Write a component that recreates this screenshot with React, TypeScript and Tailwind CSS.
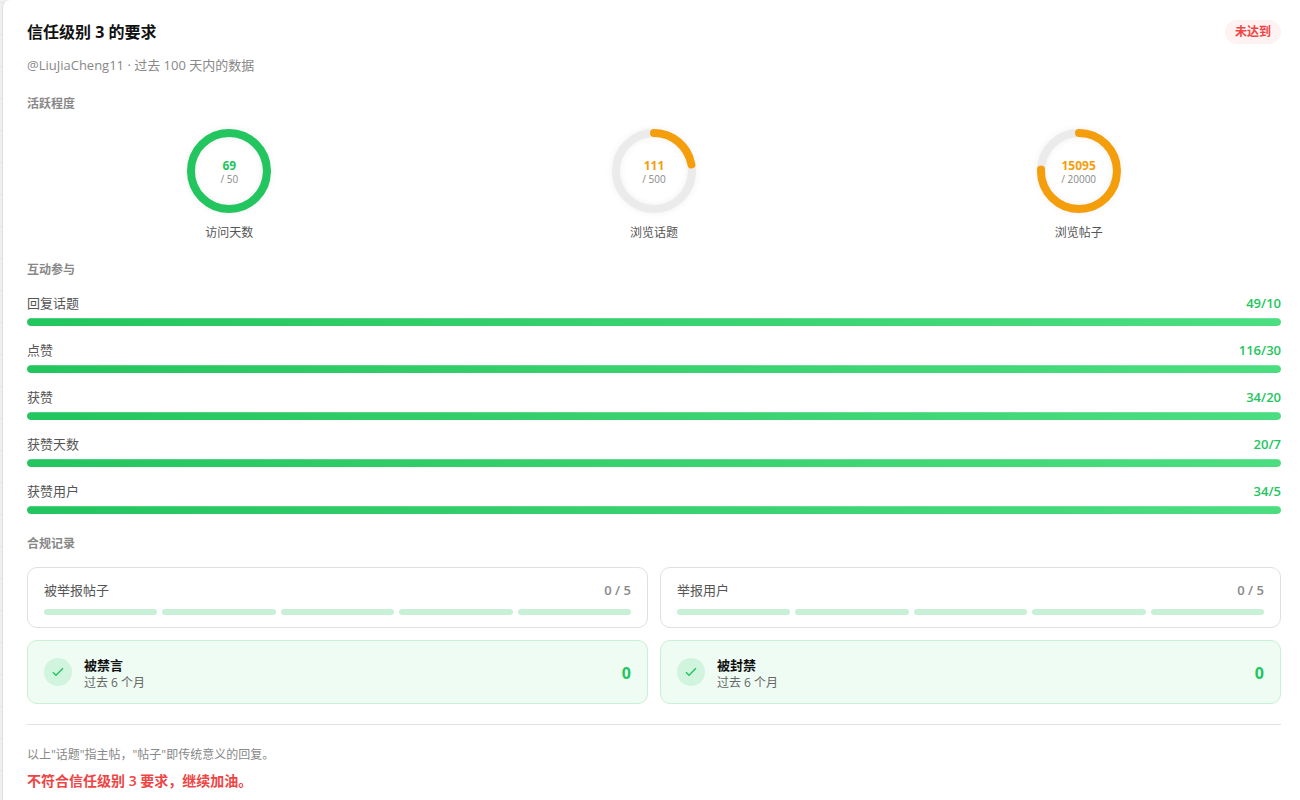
import React from 'react';

interface RingStat {
  label: string;
  value: number;
  target: number;
}

interface BarStat {
  label: string;
  value: number;
  target: number;
}

const rings: RingStat[] = [
  { label: '访问天数', value: 69, target: 50 },
  { label: '浏览话题', value: 111, target: 500 },
  { label: '浏览帖子', value: 15095, target: 20000 },
];

const bars: BarStat[] = [
  { label: '回复话题', value: 49, target: 10 },
  { label: '点赞', value: 116, target: 30 },
  { label: '获赞', value: 34, target: 20 },
  { label: '获赞天数', value: 20, target: 7 },
  { label: '获赞用户', value: 34, target: 5 },
];

const quotas = [
  { label: '被举报帖子', used: 0, max: 5 },
  { label: '举报用户', used: 0, max: 5 },
];

const vetoes = [
  { label: '被禁言', period: '过去 6 个月', count: 0 },
  { label: '被封禁', period: '过去 6 个月', count: 0 },
];

const RADIUS = 38;
const LENGTH = 2 * Math.PI * RADIUS;

const SectionTitle: React.FC<{ children: React.ReactNode }> = ({ children }) => (
  <h2 className="text-[12px] leading-[20px] font-semibold text-[#888888]">{children}</h2>
);

const Ring: React.FC<RingStat> = ({ label, value, target }) => {
  const ratio = Math.min(value / target, 1);
  const met = value >= target;

  return (
    <div className="flex flex-col items-center">
      <div className="grid place-items-center">
        <svg
          viewBox="0 0 84 84"
          className="col-start-1 row-start-1 size-[84px] -rotate-90 overflow-visible drop-shadow-[0_0_3px_rgba(0,0,0,0.06)]"
          fill="none"
          strokeWidth="8"
        >
          <circle cx="42" cy="42" r={RADIUS} stroke="#ebebeb" />
          <circle
            cx="42"
            cy="42"
            r={RADIUS}
            stroke={met ? '#22c55e' : '#f59e0b'}
            strokeLinecap="round"
            strokeDasharray={LENGTH}
            strokeDashoffset={LENGTH * (1 - ratio)}
          />
        </svg>
        <div className="col-start-1 row-start-1 flex flex-col items-center pt-px">
          <span className={`text-[12px] leading-[14px] font-bold ${met ? 'text-[#22c55e]' : 'text-[#f59e0b]'}`}>
            {value}
          </span>
          <span className="text-[10px] leading-[12px] text-[#888888]">/ {target}</span>
        </div>
      </div>
      <span className="mt-[10px] text-[12px] leading-[20px] text-[#555555]">{label}</span>
    </div>
  );
};

const Bar: React.FC<BarStat> = ({ label, value, target }) => (
  <div>
    <div className="flex justify-between text-[13px] leading-[21px]">
      <span className="text-[#555555]">{label}</span>
      <span className="font-semibold text-[#22c55e]">
        {value}/{target}
      </span>
    </div>
    <div className="mt-1 h-2 overflow-hidden rounded-full bg-[#ebebeb]">
      <div
        className="h-full rounded-full bg-linear-to-r from-[#22c55e] to-[#4ade80] shadow-[inset_0_1px_0_rgba(255,255,255,0.2)]"
        style={{ width: `${Math.min(value / target, 1) * 100}%` }}
      />
    </div>
  </div>
);

const App: React.FC = () => {
  return (
    <div className="min-h-screen overflow-hidden bg-[#f0f0f0] bg-[repeating-linear-gradient(to_bottom,transparent_0_2px,#e6e6e6_2px_3px,transparent_3px_32px)] pl-[2px] font-['Open_Sans','Noto_Sans_CJK_SC',sans-serif]">
      <main className="min-h-screen rounded-tl-lg border-l border-[#dedede] bg-white pt-5 pr-[19px] pb-2 pl-6">
        <header className="flex items-center justify-between">
          <h1 className="text-[16px] leading-[24px] font-bold text-[#111111]">信任级别 3 的要求</h1>
          <span className="rounded-full bg-[#fef2f2] px-[10px] text-[12px] leading-[24px] font-semibold text-[#ef4444]">
            未达到
          </span>
        </header>
        <p className="mt-3 text-[13px] leading-[18px] text-[#888888]">@LiuJiaCheng11 · 过去 100 天内的数据</p>

        {/* Activity */}
        <section className="mt-5">
          <SectionTitle>活跃程度</SectionTitle>
          <div className="mt-[15px] grid grid-cols-3 gap-5">
            {rings.map((r) => (
              <Ring key={r.label} {...r} />
            ))}
          </div>
        </section>

        {/* Interaction */}
        <section className="mt-[17px]">
          <SectionTitle>互动参与</SectionTitle>
          <div className="mt-[13px] flex flex-col gap-[14px]">
            {bars.map((b) => (
              <Bar key={b.label} {...b} />
            ))}
          </div>
        </section>

        {/* Compliance */}
        <section className="mt-5">
          <SectionTitle>合规记录</SectionTitle>
          <div className="mt-[13px] grid grid-cols-2 gap-3">
            {quotas.map((q) => (
              <div key={q.label} className="rounded-[10px] border border-[#e0e0e0] px-4 py-3">
                <div className="flex justify-between text-[13px] leading-[21px]">
                  <span className="text-[#555555]">{q.label}</span>
                  <span className="font-semibold text-[#888888]">
                    {q.used} / {q.max}
                  </span>
                </div>
                <div className="mt-2 flex gap-[5px]">
                  {Array.from({ length: q.max }, (_, i) => (
                    <div key={i} className={`h-[6px] flex-1 rounded-full ${i < q.used ? 'bg-[#ef4444]' : 'bg-[#c8f0d6]'}`} />
                  ))}
                </div>
              </div>
            ))}
            {vetoes.map((v) => (
              <div
                key={v.label}
                className="flex items-center gap-3 rounded-[10px] border border-[#c8f0d6] bg-[#effcf4] px-4 py-[11px]"
              >
                <div className="flex size-7 items-center justify-center rounded-full bg-[#d1f4de]">
                  <svg viewBox="0 0 14 14" className="size-[14px]" fill="none" stroke="#22c55e" strokeWidth="1.4">
                    <path d="M2 7.2 5 10.2 12 3.2" />
                  </svg>
                </div>
                <div className="flex-1 pt-1">
                  <p className="text-[13px] leading-[18px] font-semibold text-[#111111]">{v.label}</p>
                  <p className="text-[12px] leading-[18px] text-[#666666]">{v.period}</p>
                </div>
                <span className="pt-[2px] text-[16px] leading-[24px] font-bold text-[#22c55e]">{v.count}</span>
              </div>
            ))}
          </div>
        </section>

        <footer className="mt-5 border-t border-[#e0e0e0] pt-5">
          <p className="text-[12px] leading-[20px] text-[#888888]">以上"话题"指主帖，"帖子"即传统意义的回复。</p>
          <p className="mt-[6px] text-[14px] leading-[20px] font-semibold text-[#ef4444]">
            不符合信任级别 3 要求，继续加油。
          </p>
        </footer>
      </main>
    </div>
  );
};

export default App;
